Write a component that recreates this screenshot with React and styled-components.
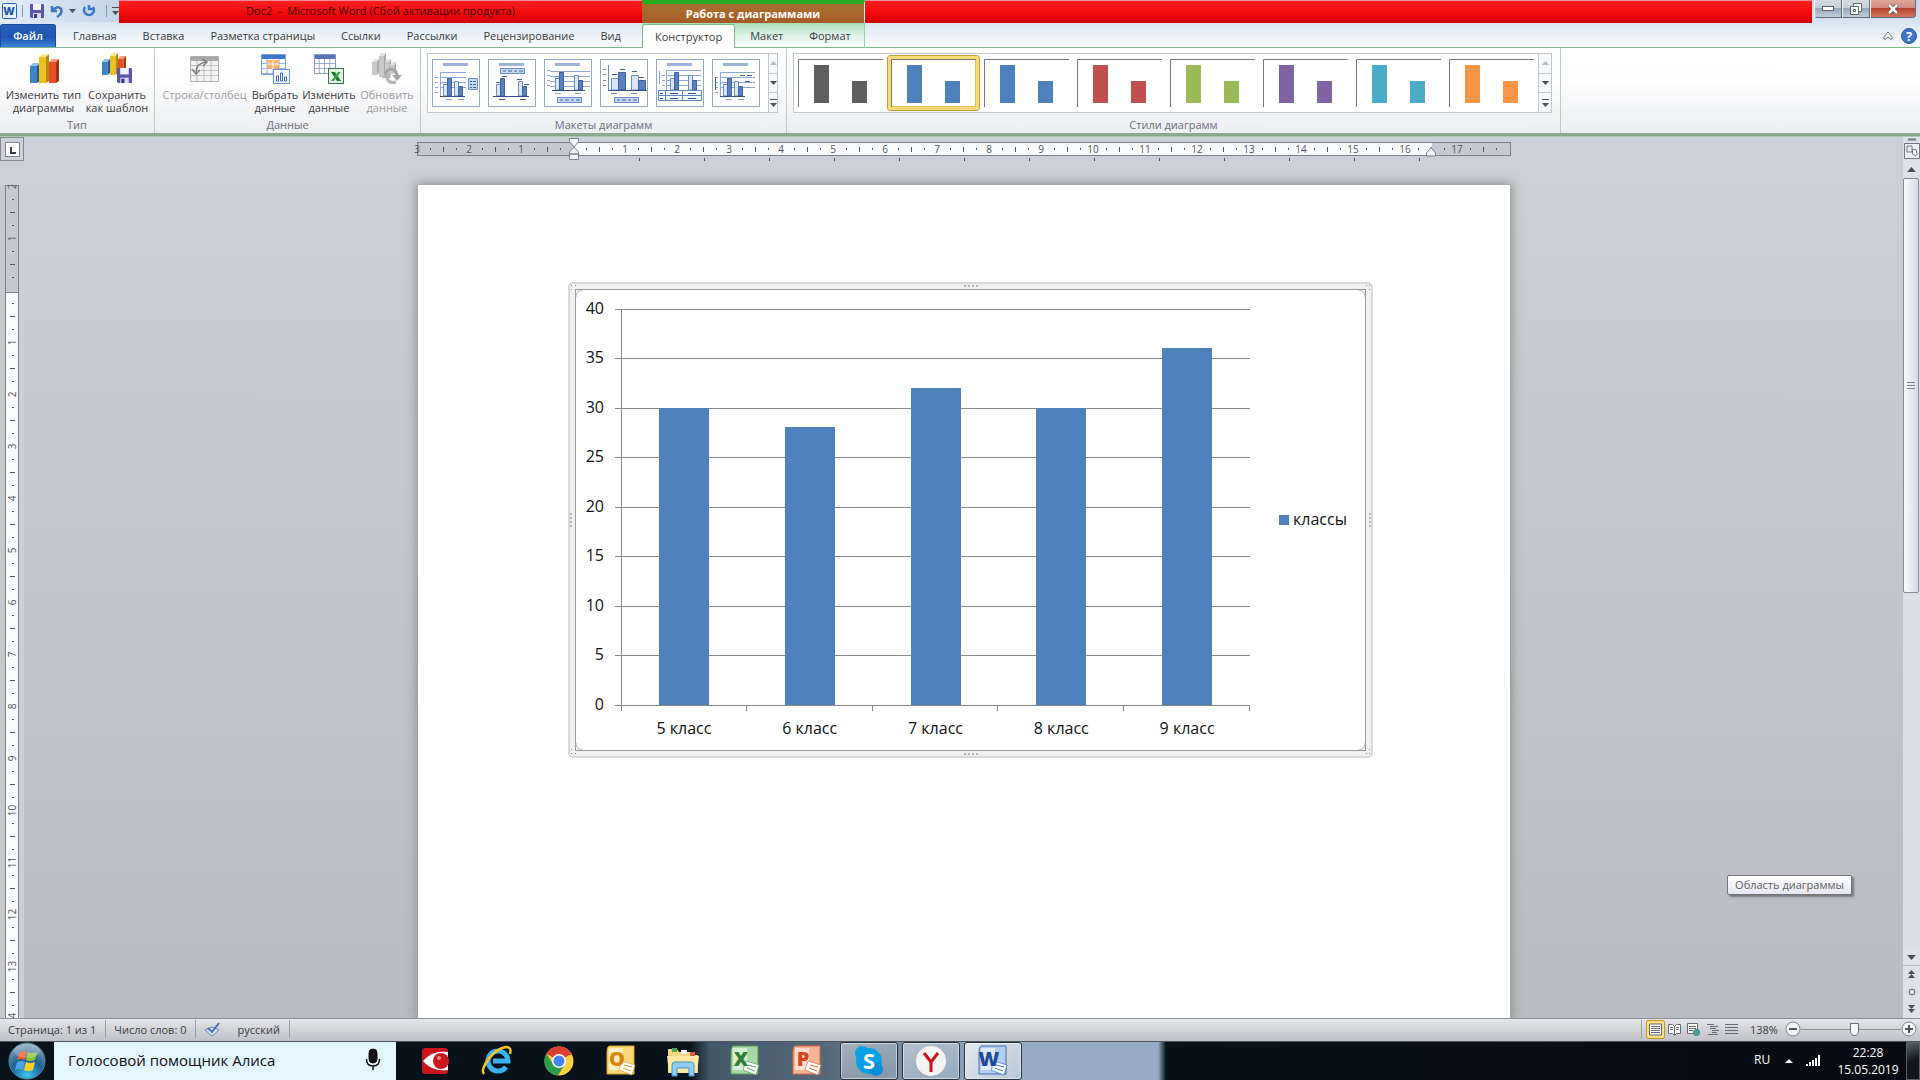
import React from 'react';
import styled, { createGlobalStyle, css } from 'styled-components';

const GlobalStyle = createGlobalStyle`
  * {
    box-sizing: border-box;
  }

  body {
    margin: 0;
    font-family: "Open Sans", "Noto Sans", sans-serif;
    font-size: 11px;
    color: #3b3b3b;
    overflow: hidden;
  }

  button {
    font: inherit;
    color: inherit;
    background: none;
    border: 0;
    padding: 0;
  }

  svg {
    display: block;
    flex: none;
  }
`;

const Desktop = styled.div`
  display: flex;
  flex-direction: column;
  height: 100vh;
`;

/* ---------- title bar and tabs ---------- */

const Header = styled.header`
  display: grid;
  grid-template-columns: 642px 223px 1fr;
  grid-template-rows: 23px 24px;
  background: linear-gradient(#c3d5ea, #d9e6f3 23px, #e6eff6 32px, #f8fbfd 46px);
  border-bottom: 1px solid #7fb58b;
`;

const TitleLeft = styled.div`
  display: flex;
`;

const QuickAccess = styled.div`
  display: flex;
  align-items: center;
  width: 119px;
  height: 22px;
  padding-left: 2px;
  background: linear-gradient(90deg, #e3edf7, #c3d5ea);
`;

const QuickButton = styled.button`
  display: flex;
  align-items: center;
  justify-content: center;
  width: ${(p) => p.$w || 16}px;
  height: 18px;
`;

const Divider = styled.i`
  width: 1px;
  height: 12px;
  background: #8a9bb0;
  margin: 0 5px;
`;

const redBar = css`
  border-top: 1px solid #f08a92;
  background: linear-gradient(#fb2020, #ee0808 60%, #cf0000);
`;

const Title = styled.h1`
  ${redBar}
  flex: 1;
  margin: 0;
  font-size: 11px;
  font-weight: 400;
  line-height: 20px;
  text-align: center;
  white-space: pre;
  color: #420404;
`;

const ContextTitle = styled.div`
  border-top: 4px solid #2aab22;
  border-right: 1px solid #e8f3e8;
  background: linear-gradient(#a3722f, #a9672c 50%, #a45a26);
  color: #fff;
  font-weight: 700;
  line-height: 20px;
  text-align: center;
`;

const TitleRight = styled.div`
  display: flex;
`;

const RedFill = styled.div`
  ${redBar}
  flex: 1;
`;

const WindowButtons = styled.div`
  display: flex;
  height: 18px;
  width: 108px;
  padding: 0 4px 0 2px;

  button {
    display: flex;
    align-items: center;
    justify-content: center;
    width: 28px;
    border: 1px solid #5d6b7c;
    border-top: 0;
    border-left-color: #f4f7fa;
    background: linear-gradient(#d4dbe4, #c5ced9 50%, #9ba9ba 50%, #c3cedb);
  }

  button:first-child {
    border-radius: 0 0 0 4px;
  }

  button:last-child {
    flex: 1;
    border-radius: 0 0 4px 0;
    background: linear-gradient(#e0a79c, #d08a7d 50%, #b4412c 50%, #d2775f);
  }
`;

const Tabs = styled.nav`
  display: flex;
  padding-top: 1px;
  ${(p) => p.$context && css`
    background: linear-gradient(#a9dcb5, #dff3ea 50%, #f4fbfb);
    border-right: 1px solid #9ed0a8;
    margin-bottom: -1px;
    border-bottom: 1px solid #7fb58b;
  `}
  ${(p) => p.$end && css`
    justify-content: flex-end;
    align-items: center;
    gap: 8px;
    padding-right: 3px;
  `}
`;

const Tab = styled.button`
  flex: none;
  padding: 0 13px;
  line-height: 23px;
  white-space: nowrap;
  ${(p) => p.$file && css`
    && {
      width: 56px;
      margin-right: 4px;
      padding: 0;
      color: #fff;
      font-weight: 600;
      border: 1px solid #1c4a9c;
      border-bottom: 0;
      border-radius: 3px 3px 0 0;
      background: linear-gradient(#2a5fb8, #1f56b4 55%, #3a83dc);
      line-height: 22px;
    }
  `}
  ${(p) => p.$active && css`
    && {
      background: #fff;
      border: 1px solid #7fb58b;
      border-bottom: 0;
      border-radius: 3px 3px 0 0;
      padding: 0 12px;
      margin: 0 2px -1px 0;
    }
  `}
`;

/* ---------- ribbon ---------- */

const Ribbon = styled.section`
  display: flex;
  height: 88px;
  background: linear-gradient(#fff, #fdfdfe 40%, #eceef1);
  border-bottom: 3px solid #86ab8f;
`;

const Group = styled.div`
  display: flex;
  flex-direction: column;
  justify-content: space-between;
  width: ${(p) => p.$w}px;
  padding: 5px 0 1px;
  border-right: 1px solid #b5d2bb;
`;

const GroupRow = styled.div`
  display: flex;
  padding-left: 5px;
`;

const GroupLabel = styled.div`
  text-align: center;
  line-height: 15px;
  color: #6b6f7b;
`;

const BigButton = styled.button`
  flex: none;
  display: flex;
  flex-direction: column;
  align-items: center;
  width: ${(p) => p.$w}px;
  line-height: 13px;
  white-space: nowrap;
  color: ${(p) => (p.disabled ? '#9c9c9c' : '#3b3b3b')};

  svg {
    margin-bottom: 3px;
  }
`;

const Gallery = styled.div`
  display: flex;
  height: 60px;
  margin: 0 8px 0 6px;
  border: 1px solid #c3c6cb;
  background: #fff;
  padding-left: ${(p) => p.$inset || 0}px;
`;

const LayoutItem = styled.button`
  width: 48px;
  height: 48px;
  margin: 5px 8px 0 0;
  border: 1px solid #93a7c6;
`;

const StyleItem = styled.button`
  display: flex;
  flex: none;
  width: 93px;
  height: 56px;
  margin-top: 1px;
  padding: 1px;
  justify-content: center;
  border: 3px solid transparent;
  ${(p) => p.$selected && css`
    border-color: #f6dc76;
    border-radius: 3px;
    box-shadow: inset 0 0 0 1px #e2bd58, 0 0 0 1px #c49a3a;
    width: 91px;
    margin: 2px 1px 0;
    height: 54px;
    padding-top: 0;
  `}
`;

const GalleryScroll = styled.div`
  display: flex;
  flex-direction: column;
  width: 14px;
  margin-left: auto;
  border-left: 1px solid #c3c6cb;

  button {
    flex: 1;
    display: flex;
    align-items: center;
    justify-content: center;
    background: #f7f8f9;
  }

  button + button {
    border-top: 1px solid #c3c6cb;
  }
`;

/* ---------- workspace ---------- */

const Workspace = styled.main`
  flex: 1;
  min-height: 0;
  display: grid;
  grid-template-columns: 24px 1fr 17px;
  grid-template-rows: 48px 1fr;
  overflow: hidden;
  border-top: 1px solid #b0c5b6;
  background: linear-gradient(#cdd0d6, #b8bbc0);
`;

const TabSelector = styled.button`
  width: 24px;
  height: 24px;
  border: 1px solid #83868f;
  display: flex;
  align-items: center;
  justify-content: center;

  svg {
    border: 1px solid #7d8089;
    background: #fff;
  }
`;

const RulerLane = styled.div`
  display: flex;
  flex-direction: column;
  align-items: center;
  padding-top: 5px;
`;

const HRuler = styled.div`
  position: relative;
  display: flex;
  align-items: center;
  width: 1094px;
  height: 14px;
  border: 1px solid #7c7f88;
  background: linear-gradient(90deg, #c6c9d0 156px, #fafbfc 156px, #fafbfc 1014px, #c6c9d0 1014px);

  svg {
    position: absolute;
    top: -5px;
    left: 149px;
  }

  svg + svg {
    top: 4px;
    left: 1006px;
  }
`;

const Cells = styled.div`
  display: flex;
  flex-direction: ${(p) => (p.$vertical ? 'column' : 'row')};
  margin: ${(p) => (p.$vertical ? '-6px 0 0' : '0 0 0 -7px')};
  align-items: center;
  color: #50535b;
`;

const Cell = styled.span`
  flex: none;
  display: flex;
  align-items: center;
  justify-content: center;
  width: 13px;
  height: 13px;
  font-size: 10px;
  line-height: 13px;
  transform: ${(p) => (p.$vertical ? 'rotate(-90deg)' : 'none')};
`;

const Tick = styled.i`
  width: 1px;
  height: ${(p) => p.$h}px;
  background: #50535b;
`;

const TabStops = styled.div`
  display: flex;
  width: 1094px;
  padding: 2px 0 0 222px;
  gap: 64px;
`;

const VLane = styled.div`
  border-right: 5px solid #cbd1d8;
  background: #c6cad0;
  padding-left: 5px;
  overflow: hidden;
`;

const VRuler = styled.div`
  width: 14px;
  height: 100%;
  border: 1px solid #7c7f88;
  border-bottom: 0;
  background: linear-gradient(#c6c9d0 106px, #7c7f88 106px, #7c7f88 107px, #fafbfc 107px);
`;

const PageLane = styled.div`
  display: flex;
  justify-content: center;
  min-height: 0;
`;

const Page = styled.article`
  width: 1092px;
  background: #fff;
  padding: 97px 0 0 150px;
  box-shadow: 0 0 10px 2px #8f9197;
`;

const ChartFrame = styled.figure`
  width: 805px;
  margin: 0;
  border: 2px solid #d9d9d9;
  border-radius: 5px;
  background: #f0f0f0;
  padding: 5px;
`;

const Scrollbar = styled.div`
  grid-column: 3;
  grid-row: 1 / 3;
  display: flex;
  flex-direction: column;
  background: #dde1e8;
`;

const ScrollButton = styled.button`
  display: flex;
  justify-content: center;
  align-items: center;
  height: ${(p) => p.$h || 17}px;
  border-bottom: ${(p) => (p.$line ? '1px solid #b4b8c0' : '0')};
`;

const Track = styled.div`
  flex: 1;
  background: #dadfe8;
`;

const Thumb = styled.div`
  display: flex;
  align-items: center;
  justify-content: center;
  height: 415px;
  margin-right: 1px;
  border: 1px solid #858a95;
  border-radius: 2px;
  background: linear-gradient(90deg, #fafbfc, #d8dce3);
`;

const Tooltip = styled.div`
  position: absolute;
  right: 68px;
  bottom: 185px;
  padding: 0 7px;
  height: 20px;
  line-height: 18px;
  color: #5c5c5c;
  border: 1px solid #767676;
  border-radius: 2px;
  background: linear-gradient(#fff, #e6e7f1);
  box-shadow: 2px 2px 2px #77797e;
`;

/* ---------- status bar ---------- */

const StatusBar = styled.footer`
  display: flex;
  align-items: center;
  height: 23px;
  border-top: 1px solid #8c9098;
  background: linear-gradient(#e6e8eb, #d4d6da 40%, #bfc2c7);
  padding: 0 3px 2px 0;
`;

const StatusItem = styled.button`
  display: flex;
  align-items: center;
  height: 18px;
  gap: 16px;
  padding: 0 9px 0 8px;
  border-right: 1px solid #9a9ea5;
`;

const ViewButtons = styled.div`
  display: flex;
  margin-left: auto;
  padding-left: 4px;
  border-left: 1px solid #9a9ea5;
`;

const ViewButton = styled.button`
  display: flex;
  align-items: center;
  justify-content: center;
  width: 19px;
  height: 19px;
  border: 1px solid ${(p) => (p.$on ? '#c2952e' : 'transparent')};
  border-radius: 2px;
  background: ${(p) => (p.$on ? '#fbdc80' : 'none')};
`;

const Zoom = styled.div`
  display: flex;
  align-items: center;
  padding-left: 9px;

  output {
    width: 35px;
  }
`;

const Slider = styled.input`
  appearance: none;
  width: 100px;
  height: 16px;
  margin: 0;
  background: linear-gradient(#8d9097, #8d9097) center / 100% 1px no-repeat;

  &::-webkit-slider-thumb {
    appearance: none;
    width: 9px;
    height: 13px;
    border: 1px solid #6c6f76;
    border-radius: 1px 1px 5px 5px;
    background: #f4f5f7;
  }
`;

/* ---------- taskbar ---------- */

const Taskbar = styled.div`
  display: flex;
  height: 39px;
  border-top: 1px solid #4a5661;
  background: linear-gradient(90deg, #07121b 0, #07121b 690px, #435869 710px, #56697b 830px, #8299b0 930px, #95acc4 1022px, #95acc4 1158px, #08111a 1166px, #070b11);
  color: #fff;
`;

const Start = styled.button`
  width: 54px;
  padding-left: 8px;
`;

const Search = styled.label`
  display: flex;
  align-items: center;
  width: 342px;
  background: #e3f5fd;
  padding: 0 15px 3px 14px;

  input {
    flex: 1;
    min-width: 0;
    border: 0;
    padding: 0;
    background: none;
    font: 15px "Open Sans", "Noto Sans", sans-serif;
    color: #111;
  }

  input::placeholder {
    color: #111;
    opacity: 1;
  }
`;

const Apps = styled.div`
  display: flex;
  gap: 4px;
  padding-left: 10px;
`;

const AppButton = styled.button`
  display: flex;
  align-items: center;
  justify-content: center;
  width: 58px;
  height: 38px;
  ${(p) => p.$open && css`
    border: 1px solid #26323e;
    border-radius: 3px;
    box-shadow: inset 0 0 0 1px rgba(255, 255, 255, .5);
    background: linear-gradient(135deg, rgba(255, 255, 255, .45), rgba(255, 255, 255, .12));
  `}
  ${(p) => p.$current && css`
    background: linear-gradient(135deg, #e3e9f0, #b9c7d7);
  `}
`;

const Tray = styled.div`
  display: flex;
  align-items: center;
  margin-left: auto;
`;

const Lang = styled.span`
  width: 31px;
  font-size: 12px;
  padding-bottom: 4px;
`;

const Clock = styled.time`
  width: 76px;
  margin-left: 9px;
  text-align: center;
  font-size: 12px;
  line-height: 17px;
`;

const ShowDesktop = styled.button`
  width: 14px;
  height: 38px;
  border: 1px solid #59636c;
  background: linear-gradient(160deg, #59636b, #10161c 50%);
`;

/* ---------- icons ---------- */

const Arrow = ({ up, faint, bar, wide }) => (
  <svg width={wide ? 9 : 7} height={bar ? 8 : wide ? 5 : 4} viewBox={bar ? '0 0 7 8' : '0 0 7 4'} fill={faint ? '#b5b8bd' : '#4b4e54'}>
    {bar && <path d="M0 0h7v1H0z" />}
    <path transform={bar ? 'translate(0 4)' : undefined} d={up ? 'M0 4h7L3.500 0z' : 'M0 0h7L3.500 4z'} />
  </svg>
);

const Column = ({ x, y, w, h, c }) => (
  <g>
    <path d={`M${x} ${y + 3}h${w * 0.7}v${h - 3}h-${w * 0.7}z`} fill={c[0]} />
    <path d={`M${x} ${y + 3}l${w * 0.3} -3h${w * 0.7}l-${w * 0.3} 3z`} fill={c[1]} />
    <path d={`M${x + w * 0.7} ${y + 3}l${w * 0.3} -3v${h - 2}l-${w * 0.3} 2z`} fill={c[2]} />
  </g>
);

const blue3d = ['#3f83c4', '#8fc1e8', '#24588f'];
const yellow3d = ['#edc224', '#faea8c', '#b9890f'];
const red3d = ['#e35227', '#f59a72', '#a92f12'];
const gray3d = ['#c9c9c9', '#e4e4e4', '#a9a9a9'];

const Floppy = ({ x = 0, y = 0, s = 14 }) => (
  <g transform={`translate(${x} ${y}) scale(${s / 14})`}>
    <path d="M0 0h13l1 1v13H1l-1-1z" fill="#5a55a8" />
    <path d="M3 0h8v6H3z" fill="#f2f3fb" />
    <path d="M3 9h8v5H3z" fill="#d8daea" />
    <path d="M4 10h3v4H4z" fill="#3b3884" />
  </g>
);

const ChangeTypeIcon = () => (
  <svg width="32" height="32">
    <Column x={2} y={10} w={10} h={20} c={blue3d} />
    <Column x={11} y={1} w={10} h={29} c={yellow3d} />
    <Column x={21} y={6} w={10} h={24} c={red3d} />
  </svg>
);

const SaveTemplateIcon = () => (
  <svg width="32" height="32">
    <Column x={1} y={6} w={8} h={16} c={blue3d} />
    <Column x={9} y={0} w={8} h={22} c={yellow3d} />
    <Column x={17} y={3} w={8} h={19} c={red3d} />
    <Floppy x={16} y={15} s={15} />
  </svg>
);

const Sheet = ({ w, h, head, line, fill = '#fff' }) => (
  <g>
    <path d={`M.5 .5h${w}v${h}H.5z`} fill={fill} stroke={line} />
    <path d={`M1 1h${w - 1}v4H1z`} fill={head} />
    <path
      d={`M1 9.500h${w}M1 14.500h${w}M1 19.500h${w}M${w / 4} 5v${h - 5}M${w / 2} 5v${h - 5}M${w * 0.75} 5v${h - 5}`}
      stroke={line}
      fill="none"
      strokeWidth=".8"
    />
  </g>
);

const SwapIcon = () => (
  <svg width="32" height="32">
    <g transform="translate(1 3)"><Sheet w={28} h={25} head="#a7a7a7" line="#b1b1b1" fill="#f4f4f4" /></g>
    <path d="M7 20q0-10 10-11" fill="none" stroke="#808080" strokeWidth="1.500" />
    <path d="M13 6l5 3-4 4M3 16l4 5 4-4" fill="none" stroke="#808080" strokeWidth="1.500" />
  </svg>
);

const SelectDataIcon = () => (
  <svg width="32" height="32">
    <g transform="translate(2 1)">
      <Sheet w={24} h={20} head="#3f74c8" line="#7ba3dc" />
      <path d="M6 6h12v9H6z" fill="#f5a04c" opacity=".8" />
      <path d="M6 10h12M12 6v9" stroke="#fff" />
    </g>
    <rect x="14.500" y="16.500" width="16" height="14" fill="#f3f8fe" stroke="#6a95cf" />
    <path d="M17.500 28v-5h2v5zM21.500 28v-8h2v8zM25.500 28v-4h2v4z" fill="#fff" stroke="#3c69ae" />
  </svg>
);

const EditDataIcon = () => (
  <svg width="32" height="32">
    <g transform="translate(1 1)"><Sheet w={21} h={19} head="#5a73b8" line="#8497cc" /></g>
    <rect x="15.500" y="15.500" width="15" height="15" fill="#e5f3e3" stroke="#2c7a38" />
    <path d="M18 19h4l6 9h-4z" fill="#1c7a33" />
    <path d="M28 19h-3l-7 9h3z" fill="#3fa353" />
  </svg>
);

const RefreshIcon = () => (
  <svg width="32" height="32">
    <Column x={1} y={6} w={7} h={16} c={gray3d} />
    <Column x={8} y={0} w={7} h={24} c={gray3d} />
    <Column x={14} y={6} w={6} h={18} c={gray3d} />
    <Column x={19} y={9} w={6} h={12} c={gray3d} />
    <path d="M14 21q3-7 9-4 3 2 3 6" fill="none" stroke="#a5a5a5" strokeWidth="3" />
    <path d="M21 22h10l-5 6z" fill="#a5a5a5" />
    <path d="M25 29q-7 2-9-4" fill="none" stroke="#b4b4b4" strokeWidth="3" />
    <path d="M11 25l5-6 4 6z" fill="#b4b4b4" />
  </svg>
);

const MiniBars = ({ x = 0, y = 0, wide, gap = 17 }) => {
  const w = wide ? 7 : 4;
  return (
    <g transform={`translate(${x} ${y})`} strokeWidth="1">
      {[0, gap].map((dx, i) => (
        <g key={dx}>
          <path d={`M${dx + 0.5} ${i ? 5 : 8}.5h${w}V20h-${w}z`} fill="#dbe7f8" stroke="#6b8dc4" />
          <path d={`M${dx + w + 0.5} ${i ? 10 : 2}.5h${w}V20h-${w}z`} fill="#5c80be" stroke="#3e619f" />
        </g>
      ))}
      <path d={`M-3 20.500h${gap + w * 2 + 6}`} stroke="#33517f" />
    </g>
  );
};

const Legend = ({ x, y }) => (
  <g>
    <rect x={x + 0.5} y={y + 0.5} width="24" height="5" fill="#c7d8f1" stroke="#6b8dc4" />
    <path d={`M${x + 3} ${y + 3}h3m2 0h4m2 0h3m2 0h4`} stroke="#3e619f" />
  </g>
);

const Grid = ({ x = 7, y = 12, w = 36 }) => (
  <path d={[0, 5, 10, 15].map((d) => `M${x} ${y + d}.5h${w}`).join('')} stroke="#8ba6d2" />
);

const LayoutThumb = ({ kind }) => (
  <svg width="46" height="46" fill="none">
    {kind !== 3 && <path d="M10 3h25v3H10z" fill="#9db2d8" />}
    {(kind === 0 || kind === 5) && (
      <g>
        <Grid x={7} w={kind ? 35 : 26} />
        <path d="M7.500 12v25M2 17.500h3M2 22.500h3M2 27.500h3M2 32.500h3M13 39.500h6M25 39.500h6" stroke="#8ba6d2" />
        <MiniBars x={10} y={16} gap={11} />
      </g>
    )}
    {kind === 0 && (
      <g>
        <path d="M35.500 18.500h9v11h-9z" fill="#c7d8f1" stroke="#6b8dc4" />
        <path d="M37 21.500h2m1 0h3M37 24.500h2m1 0h3M37 27.500h2m1 0h3" stroke="#3e619f" />
      </g>
    )}
    {kind === 5 && <path d="M27 15.500h5m2 0h5M32 21.500h5M2.500 17v13" stroke="#3e619f" />}
    {kind === 1 && (
      <g>
        <Legend x={11} y={8} />
        <MiniBars x={7} y={16} gap={22} />
        <path d="M7 22.500h5M13 16.500h5M28 19.500h5M35 24.500h5M10 39.500h6M31 39.500h6" stroke="#3e619f" />
      </g>
    )}
    {kind === 2 && (
      <g>
        <Grid x={5} y={11} w={40} />
        <path d="M2 10.500h3M2 15.500h3M2 20.500h3M2 25.500h3M10 33.500h6M30 33.500h6" stroke="#8ba6d2" />
        <MiniBars x={10} y={10} gap={19} />
        <Legend x={12} y={37} />
      </g>
    )}
    {kind === 3 && (
      <g>
        <path d="M7.500 5v26M2 9.500h3M2 14.500h3M2 20.500h3M2 25.500h3M10 33.500h6M30 33.500h6" stroke="#6b8dc4" />
        <MiniBars x={10} y={10} wide gap={20} />
        <path d="M11 14.500h5M19 9.500h5M31 11.500h5M38 17.500h5" stroke="#3e619f" />
        <Legend x={13} y={37} />
      </g>
    )}
    {kind === 4 && (
      <g>
        <Grid x={9} y={10} w={35} />
        <path d="M2.500 11v13M9.500 10v20M5 15.500h3M5 20.500h3M5 25.500h3" stroke="#8ba6d2" />
        <MiniBars x={13} y={10} gap={18} />
        <path d="M1.500 30.500h43v10h-43zM1.500 35.500h43M8.500 30.500v10M25.500 30.500v10" stroke="#5f86bd" fill="#f4fafe" />
        <path d="M3 33.500h3M3 38.500h3M13 33.500h8M13 38.500h8M31 33.500h8M31 38.500h8" stroke="#33517f" />
      </g>
    )}
  </svg>
);

const StyleThumb = ({ color }) => (
  <svg width="85" height="48">
    <path d="M.5 48V.5H85" stroke="#777" fill="none" />
    <path d="M16 6h15v38H16zM54 22h15v22H54z" fill={color} />
  </svg>
);

const DocLogo = ({ letter, dark, mid, pale }) => (
  <svg width="32" height="32">
    <path d="M4 1h25v28H2V7q0-5 2-6z" fill={pale} stroke={mid} />
    <path d="M4 3h14v22H4z" fill="#fff" opacity=".55" />
    <path d="M17 16l13 4-3 10-13-5z" fill="#fff" stroke={mid} strokeWidth=".7" />
    <path d="M19 20l8 2M18 23l8 3" stroke={mid} />
    <text x="12" y="21" textAnchor="middle" fontSize="20" fontWeight="800" fill={dark} fontFamily="Open Sans, sans-serif">{letter}</text>
  </svg>
);

const WinOrb = () => (
  <svg width="38" height="38" viewBox="0 0 38 38">
    <defs>
      <radialGradient id="orb" cx=".5" cy=".9" r=".9">
        <stop offset="0" stopColor="#35c8f0" />
        <stop offset=".5" stopColor="#1c5f92" />
        <stop offset="1" stopColor="#8ba9bd" />
      </radialGradient>
    </defs>
    <circle cx="19" cy="19" r="18" fill="url(#orb)" stroke="#5f7f94" />
    <path d="M11 11q4-3 8-1l-2 8q-4-2-8 0z" fill="#ea5a2b" />
    <path d="M20 10q4 2 9 0l-2 8q-5 2-9 0z" fill="#8cc63f" />
    <path d="M9 20q4-2 8 0l-2 8q-4-2-8 0z" fill="#4aa3e8" />
    <path d="M18 20q4 2 9 0l-2 8q-5 2-9 0z" fill="#fccb2e" />
    <ellipse cx="19" cy="9" rx="13" ry="7" fill="#fff" opacity=".22" />
  </svg>
);

const EyeLogo = () => (
  <svg width="32" height="32">
    <rect x="3" y="3" width="26" height="26" rx="3" fill="#c9151b" />
    <path d="M4 16q9-11 25-9v18q-16 2-25-9z" fill="#fff" />
    <circle cx="22" cy="16" r="8" fill="#c9151b" />
    <circle cx="20" cy="13" r="2" fill="#f08a80" />
  </svg>
);

const IeLogo = () => (
  <svg width="32" height="32" fill="none">
    <path d="M25 22a10 10 0 1 1 2-6H12" stroke="#3bb0ea" strokeWidth="5" />
    <path d="M3 29C-2 24 12 4 25 2q6 0 4 7" stroke="#f4c321" strokeWidth="2.500" />
  </svg>
);

const ChromeLogo = () => (
  <svg width="32" height="32">
    <circle cx="16" cy="16" r="14.500" fill="#fcd043" />
    <path d="M16 16L3.400 8.800A14.500 14.500 0 0 1 28.600 8.800z" fill="#d9402f" />
    <path d="M3.400 8.800A14.500 14.500 0 0 0 15 30.500L22 19 10 19z" fill="#2a9d4e" />
    <path d="M16 9h12.700" stroke="#d9402f" strokeWidth="2" />
    <circle cx="16" cy="16" r="7" fill="#fff" />
    <circle cx="16" cy="16" r="5.500" fill="#4384f3" />
  </svg>
);

const FolderLogo = () => (
  <svg width="34" height="32">
    <path d="M2 4h9l2 3h12l2 3h5v18H2z" fill="#f2d77d" />
    <path d="M6 3h5v4H6z" fill="#4fa458" />
    <path d="M15 5h6v4h-6z" fill="#e9f3fb" />
    <path d="M24 7h5v4h-5z" fill="#dd5443" />
    <path d="M1 11h32l-2 17H3z" fill="#fbe9a4" />
    <path d="M6 31V20q0-3 3-3h16q3 0 3 3v11h-5v-8H11v8z" fill="#8fcdf0" stroke="#4792c8" />
  </svg>
);

const SkypeLogo = () => (
  <svg width="32" height="32">
    <circle cx="16" cy="16" r="13" fill="#0c9fe4" />
    <circle cx="9" cy="8" r="7" fill="#0c9fe4" />
    <circle cx="23" cy="24" r="7" fill="#0c8fd8" />
    <text x="16" y="24" textAnchor="middle" fontSize="22" fontWeight="700" fill="#fff" fontFamily="Open Sans, sans-serif">S</text>
  </svg>
);

const YandexLogo = () => (
  <svg width="32" height="32" fill="none">
    <circle cx="16" cy="16" r="15" fill="#f5f4f4" />
    <path d="M9 8l7 9 7-9M16 16v11" stroke="#c9141b" strokeWidth="3" />
  </svg>
);

const Lines = ({ kind }) => (
  <svg width="13" height="13" fill="none" stroke="#666a72">
    {kind === 'page' && <path d="M.5 1v11h12V1zM2 3.500h9M2 5.500h9M2 7.500h9M2 9.500h9" fill="#fff" />}
    {kind === 'read' && <path d="M.5 1.500h4l2 2 2-2h4v9h-4l-2 2-2-2h-4zM6.500 3v9M2 4.500h3M2 6.500h3M8 4.500h3M8 6.500h3" fill="#fff" />}
    {kind === 'web' && (
      <g>
        <path d="M.5 .5h10v10H.5zM2 3.500h7M2 5.500h7M2 7.500h4" fill="#fff" />
        <circle cx="9.500" cy="9.500" r="3" fill="#4aa08c" stroke="#33738f" />
      </g>
    )}
    {kind === 'outline' && <path d="M1 1.500h7M4 3.500h8M4 5.500h6M6 7.500h7M6 9.500h5M2 11.500h10" />}
    {kind === 'draft' && <path d="M0 1.500h13M0 4.500h13M0 7.500h13M0 10.500h13" />}
  </svg>
);

const ZoomGlyph = ({ plus }) => (
  <svg width="16" height="16" fill="none">
    <circle cx="8" cy="8" r="7" fill="#f2f3f5" stroke="#7d8188" />
    <path d={plus ? 'M4 8h8M8 4v8' : 'M4 8h8'} stroke="#50545b" strokeWidth="2" />
  </svg>
);

/* ---------- chart ---------- */

const data = [
  { name: '5 класс', value: 30 },
  { name: '6 класс', value: 28 },
  { name: '7 класс', value: 32 },
  { name: '8 класс', value: 30 },
  { name: '9 класс', value: 36 },
];

const plot = { left: 46, top: 20, width: 629, height: 396 };

const Dots = ({ x, y, vertical }) => (
  <path
    d={[0, 4, 8, 12].map((d) => `M${vertical ? x : x + d} ${vertical ? y + d : y}h2v2h-2z`).join('')}
    fill="#b3b3b3"
  />
);

const BarChart = () => {
  const step = plot.width / data.length;
  const bottom = plot.top + plot.height;
  const yOf = (v) => Math.floor(bottom - (v * plot.height) / 40);
  return (
    <svg width="791" height="462" overflow="visible" fontFamily="'Open Sans', 'Noto Sans', sans-serif" fontSize="16" fill="#111">
      <rect x=".5" y=".5" width="790" height="461" fill="#fff" stroke="#9a9a9a" />
      <path d="M1 8q0-7 7-7M783 1q7 0 7 7M1 454q0 7 7 7M783 461q7 0 7-7" fill="none" stroke="#b5b5b5" />
      <Dots x={389} y={-4} />
      <Dots x={389} y={464} />
      <Dots x={-5} y={224} vertical />
      <Dots x={794} y={224} vertical />
      <path
        d="M-4-4h1v1h-1zM0-4h1v1H0zM-4 0h1v1h-1zM791-4h1v1h-1zM794-4h1v1h-1zM794 0h1v1h-1zM-4 464h1v1h-1zM0 464h1v1H0zM-4 460h1v1h-1zM791 464h1v1h-1zM794 464h1v1h-1zM794 460h1v1h-1z"
        fill="#8f8f8f"
      />
      {[0, 5, 10, 15, 20, 25, 30, 35, 40].map((v) => (
        <g key={v}>
          <path d={`M${plot.left - 6} ${yOf(v) + 0.5}H${plot.left + plot.width}`} stroke="#868686" />
          <text x="29" y={yOf(v) + 5} textAnchor="end">{v}</text>
        </g>
      ))}
      {data.map((d, i) => (
        <g key={d.name}>
          <rect x={Math.round(plot.left + step * i + 38)} y={yOf(d.value)} width="50" height={bottom - yOf(d.value)} fill="#4f81bd" />
          <path d={`M${Math.round(plot.left + step * (i + 1)) - 0.5} ${bottom}v6`} stroke="#868686" />
          <text x={plot.left + step * (i + 0.5)} y={bottom + 29} textAnchor="middle">{d.name}</text>
        </g>
      ))}
      <path d={`M${plot.left + 0.5} ${plot.top}V${bottom + 6}`} stroke="#868686" />
      <rect x="704" y="226" width="10" height="10" fill="#4f81bd" />
      <text x="718" y="236">классы</text>
    </svg>
  );
};

const rulerCell = (i, zero, vertical) => {
  const n = Math.abs(i - zero);
  if (n % 4 === 0) {
    return <Cell key={i} $vertical={vertical}>{n ? n / 4 : ''}</Cell>;
  }
  return <Cell key={i} $vertical={vertical}><Tick $h={n % 2 ? 2 : 5} /></Cell>;
};

const cells = (count, zero, vertical) => Array.from({ length: count }, (_, i) => rulerCell(i, zero, vertical));

const mainTabs = ['Главная', 'Вставка', 'Разметка страницы', 'Ссылки', 'Рассылки', 'Рецензирование', 'Вид'];
const chartColors = ['#606060', '#4f81bd', '#4f81bd', '#c0504d', '#9bbb59', '#8064a2', '#4bacc6', '#f79646'];

const ScrollArrows = () => (
  <GalleryScroll>
    <button aria-label="Вверх"><Arrow up faint /></button>
    <button aria-label="Вниз"><Arrow /></button>
    <button aria-label="Ещё"><Arrow bar /></button>
  </GalleryScroll>
);

const App = () => (
  <Desktop>
    <GlobalStyle />
    <Header>
      <TitleLeft>
        <QuickAccess>
          <svg width="15" height="16">
            <rect x=".5" y=".5" width="14" height="15" rx="1" fill="#e9f2fc" stroke="#2b62ae" />
            <text x="7" y="12" textAnchor="middle" fontSize="11" fontWeight="800" fill="#1f56a8">W</text>
          </svg>
          <Divider />
          <QuickButton $w={20} aria-label="Сохранить"><svg width="14" height="14"><Floppy /></svg></QuickButton>
          <QuickButton $w={22} aria-label="Отменить">
            <svg width="14" height="14" fill="none" stroke="#4272c4" strokeWidth="2.500"><path d="M2 2v5h5M3 6q5-5 8-1 2 4-4 8" /></svg>
          </QuickButton>
          <QuickButton $w={9} aria-label="Список отмены"><Arrow /></QuickButton>
          <QuickButton $w={26} aria-label="Повторить">
            <svg width="14" height="14" fill="none" stroke="#3c74cc" strokeWidth="2.500"><path d="M3 3a5 5 0 1 0 8 0M7 1v4h5" /></svg>
          </QuickButton>
          <Divider />
          <QuickButton $w={7} aria-label="Настройка панели"><Arrow bar /></QuickButton>
        </QuickAccess>
        <Title>{'Doc2  -  Microsoft Word (Сбой активации продукта)'}</Title>
      </TitleLeft>
      <ContextTitle>Работа с диаграммами</ContextTitle>
      <TitleRight>
        <RedFill />
        <WindowButtons>
          <button aria-label="Свернуть"><svg width="12" height="5"><rect x=".5" y=".5" width="11" height="4" fill="#fff" stroke="#5b6470" /></svg></button>
          <button aria-label="Восстановить">
            <svg width="12" height="12" fill="#fff" stroke="#5b6470"><path d="M3.500 .5h8v8h-8z" /><path d="M.5 3.500h8v8h-8zM3.500 6.500h2v2h-2z" /></svg>
          </button>
          <button aria-label="Закрыть">
            <svg width="12" height="10" fill="none"><path d="M2 1l8 8M10 1l-8 8" stroke="#5b3a3a" strokeWidth="4" /><path d="M2 1l8 8M10 1l-8 8" stroke="#fff" strokeWidth="2.500" /></svg>
          </button>
        </WindowButtons>
      </TitleRight>
      <Tabs>
        <Tab $file>Файл</Tab>
        {mainTabs.map((t) => <Tab key={t}>{t}</Tab>)}
      </Tabs>
      <Tabs $context>
        <Tab $active>Конструктор</Tab>
        <Tab>Макет</Tab>
        <Tab>Формат</Tab>
      </Tabs>
      <Tabs $end>
        <button aria-label="Свернуть ленту"><svg width="10" height="9" fill="#fff" stroke="#6a7078"><path d="M1 6l4-5 4 5v2H7L5 6 3 8H1z" /></svg></button>
        <button aria-label="Справка">
          <svg width="16" height="16">
            <circle cx="8" cy="8" r="7.500" fill="#3f74c9" stroke="#2d5aa5" />
            <text x="8" y="13" textAnchor="middle" fontSize="13" fontWeight="700" fill="#fff">?</text>
          </svg>
        </button>
      </Tabs>
    </Header>

    <Ribbon>
      <Group $w={155}>
        <GroupRow>
          <BigButton $w={77}><ChangeTypeIcon />Изменить тип<br />диаграммы</BigButton>
          <BigButton $w={70}><SaveTemplateIcon />Сохранить<br />как шаблон</BigButton>
        </GroupRow>
        <GroupLabel>Тип</GroupLabel>
      </Group>
      <Group $w={266}>
        <GroupRow>
          <BigButton $w={89} disabled><SwapIcon />Строка/столбец</BigButton>
          <BigButton $w={52}><SelectDataIcon />Выбрать<br />данные</BigButton>
          <BigButton $w={56}><EditDataIcon />Изменить<br />данные</BigButton>
          <BigButton $w={60} disabled><RefreshIcon />Обновить<br />данные</BigButton>
        </GroupRow>
        <GroupLabel>Данные</GroupLabel>
      </Group>
      <Group $w={366}>
        <Gallery $inset={4}>
          {[0, 1, 2, 3, 4, 5].map((k) => (
            <LayoutItem key={k} aria-label={`Макет ${k + 1}`}><LayoutThumb kind={k} /></LayoutItem>
          ))}
          <ScrollArrows />
        </Gallery>
        <GroupLabel>Макеты диаграмм</GroupLabel>
      </Group>
      <Group $w={774}>
        <Gallery>
          {chartColors.map((c, i) => (
            <StyleItem key={i} $selected={i === 1} aria-label={`Стиль ${i + 1}`}><StyleThumb color={c} /></StyleItem>
          ))}
          <ScrollArrows />
        </Gallery>
        <GroupLabel>Стили диаграмм</GroupLabel>
      </Group>
    </Ribbon>

    <Workspace>
      <TabSelector aria-label="Тип табуляции">
        <svg width="15" height="15"><path d="M5 4v6h5" stroke="#3c3e44" strokeWidth="2" fill="none" /></svg>
      </TabSelector>
      <RulerLane>
        <HRuler>
          <Cells>{cells(84, 12)}</Cells>
          <svg width="14" height="24" fill="#f3f4f6" stroke="#7c7f88">
            <path d="M2.500 .5h9v3L7 9 2.500 3.500zM7 9l4.500 5v2h-9v-2zM2.500 16h9v5.500h-9z" />
          </svg>
          <svg width="14" height="10" fill="#f3f4f6" stroke="#7c7f88"><path d="M7 .5L11.500 6v3h-9V6z" /></svg>
        </HRuler>
        <TabStops>{Array.from({ length: 13 }, (_, i) => <Tick key={i} $h={3} />)}</TabStops>
      </RulerLane>
      <VLane>
        <VRuler><Cells $vertical>{cells(65, 8, true)}</Cells></VRuler>
      </VLane>
      <PageLane>
        <Page>
          <ChartFrame><BarChart /></ChartFrame>
        </Page>
      </PageLane>
      <Scrollbar>
        <ScrollButton $h={23} aria-label="Линейка">
          <svg width="16" height="21" fill="#eef0f3" stroke="#73767e">
            <path d="M4 1.500h8" strokeWidth="2" />
            <path d="M.5 5.500h15v15H.5zM3 8h5v6H3zM8.500 11l4 1v3l1 1-2 2-3-2z" />
          </svg>
        </ScrollButton>
        <ScrollButton $h={18} aria-label="Прокрутить вверх"><Arrow up wide /></ScrollButton>
        <Track>
          <Thumb><svg width="8" height="8" stroke="#7c818b"><path d="M0 .5h8M0 3.500h8M0 6.500h8" /></svg></Thumb>
        </Track>
        <ScrollButton $line aria-label="Прокрутить вниз"><Arrow wide /></ScrollButton>
        <ScrollButton aria-label="Предыдущая страница">
          <svg width="7" height="9" fill="#4b4e54"><path d="M3.500 0L7 4H0zM3.500 4L7 8H0z" /></svg>
        </ScrollButton>
        <ScrollButton aria-label="Выбор объекта"><svg width="8" height="8" fill="none" stroke="#5b5e65"><circle cx="4" cy="4" r="3" /></svg></ScrollButton>
        <ScrollButton $h={18} aria-label="Следующая страница">
          <svg width="7" height="9" fill="#4b4e54"><path d="M3.500 4L7 0H0zM3.500 8L7 4H0z" /></svg>
        </ScrollButton>
      </Scrollbar>
    </Workspace>
    <Tooltip role="tooltip">Область диаграммы</Tooltip>

    <StatusBar>
      <StatusItem>Страница: 1 из 1</StatusItem>
      <StatusItem>Число слов: 0</StatusItem>
      <StatusItem>
        <svg width="17" height="15">
          <path d="M1 8l7-3 7 3-7 6z" fill="#dfe8f7" stroke="#6a86bb" />
          <path d="M4 6l4 4 7-9" fill="none" stroke="#4a6db4" strokeWidth="2" />
        </svg>
        русский
      </StatusItem>
      <ViewButtons>
        {['page', 'read', 'web', 'outline', 'draft'].map((k) => (
          <ViewButton key={k} $on={k === 'page'} aria-label={k}><Lines kind={k} /></ViewButton>
        ))}
      </ViewButtons>
      <Zoom>
        <output>138%</output>
        <button aria-label="Уменьшить"><ZoomGlyph /></button>
        <Slider type="range" min="0" max="100" defaultValue="54" aria-label="Масштаб" />
        <button aria-label="Увеличить"><ZoomGlyph plus /></button>
      </Zoom>
    </StatusBar>

    <Taskbar>
      <Start aria-label="Пуск"><WinOrb /></Start>
      <Search>
        <input placeholder="Голосовой помощник Алиса" aria-label="Голосовой помощник Алиса" />
        <svg width="16" height="24" fill="none" stroke="#111">
          <rect x="4" y="1" width="8" height="14" rx="4" fill="#111" />
          <path d="M1.500 11q0 7 6.500 7t6.500-7M8 18v4" strokeWidth="1.500" />
        </svg>
      </Search>
      <Apps>
        <AppButton aria-label="Просмотр"><EyeLogo /></AppButton>
        <AppButton aria-label="Internet Explorer"><IeLogo /></AppButton>
        <AppButton aria-label="Chrome"><ChromeLogo /></AppButton>
        <AppButton aria-label="Outlook"><DocLogo letter="O" dark="#d98509" mid="#dca22a" pale="#fbd978" /></AppButton>
        <AppButton aria-label="Проводник"><FolderLogo /></AppButton>
        <AppButton aria-label="Excel"><DocLogo letter="X" dark="#2c7f35" mid="#4f9f55" pale="#a9d8a2" /></AppButton>
        <AppButton aria-label="PowerPoint"><DocLogo letter="P" dark="#d1491c" mid="#d9663c" pale="#f5b697" /></AppButton>
        <AppButton $open aria-label="Skype"><SkypeLogo /></AppButton>
        <AppButton $open aria-label="Яндекс"><YandexLogo /></AppButton>
        <AppButton $open $current aria-label="Word"><DocLogo letter="W" dark="#1c4b9c" mid="#3f6fb8" pale="#b3cdf0" /></AppButton>
      </Apps>
      <Tray>
        <Lang>RU</Lang>
        <svg width="8" height="4" fill="#fff"><path d="M4 0l4 4H0z" /></svg>
        <svg width="28" height="12" fill="#fff"><path d="M13 9h2v2h-2zM16 7h2v4h-2zM19 5h2v6h-2zM22 3h2v8h-2zM25 0h2v11h-2z" /></svg>
        <Clock>22:28<br />15.05.2019</Clock>
        <ShowDesktop aria-label="Свернуть все окна" />
      </Tray>
    </Taskbar>
  </Desktop>
);

export default App;
